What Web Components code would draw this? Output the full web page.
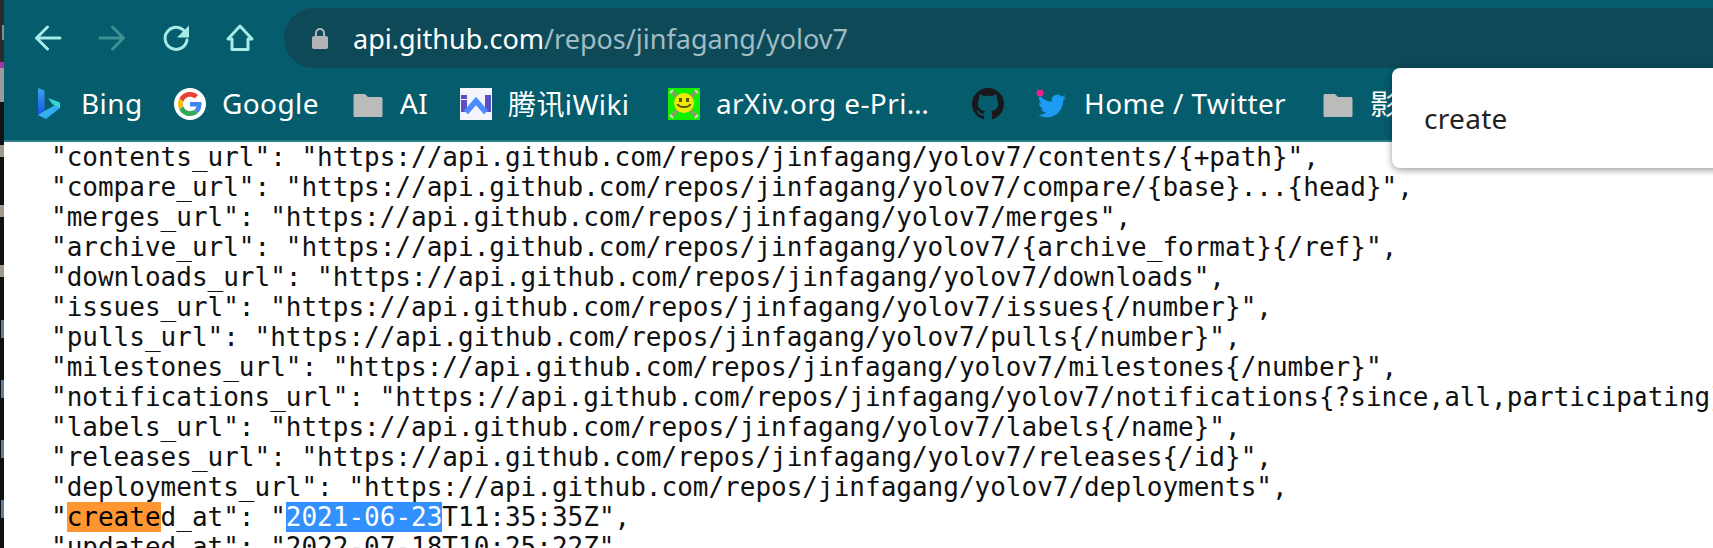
<!DOCTYPE html>
<html>
<head>
<meta charset="utf-8">
<title>api.github.com/repos/jinfagang/yolov7</title>
<style>
  html, body { margin: 0; height: 100%; overflow: hidden; background: #fff; }
  browser-shot { font-family: "Noto Sans", "Noto Sans CJK SC", sans-serif; }
</style>
</head>
<body>
<browser-shot>
  <side-strip slot="strip"></side-strip>
  <nav-bar url-host="api.github.com" url-path="/repos/jinfagang/yolov7"></nav-bar>
  <bookmark-bar>
    <book-mark w="141">
      <svg slot="icon" width="32" height="32" viewBox="0 0 32 32">
        <defs>
          <linearGradient id="bingA" x1="0" y1="0" x2="0" y2="1"><stop offset="0" stop-color="#37a6e8"/><stop offset="1" stop-color="#1a4fe8"/></linearGradient>
          <linearGradient id="bingB" x1="0" y1="0" x2="1" y2="1"><stop offset="0" stop-color="#35c8f0"/><stop offset="1" stop-color="#2f9cf0"/></linearGradient>
        </defs>
        <path fill="url(#bingA)" d="M5 0l6.5 2.5v20.5L5 27z"/>
        <path fill="url(#bingB)" d="M5 27l6.500-4 15.500-8.500v5.500L13 31z"/>
        <path fill="#38d6d6" d="M15 10l12 4.500v5.500l-7.500-3.800z"/>
      </svg>
      Bing
    </book-mark>
    <book-mark w="178">
      <svg slot="icon" width="32" height="32" viewBox="0 0 32 32">
        <circle cx="16" cy="16" r="16" fill="#fff"/>
        <g transform="translate(4 4) scale(.5)">
          <path fill="#EA4335" d="M24 9.500c3.540 0 6.710 1.220 9.210 3.600l6.850-6.850C35.900 2.380 30.470 0 24 0 14.620 0 6.510 5.380 2.560 13.220l7.980 6.190C12.430 13.720 17.740 9.500 24 9.500z"/>
          <path fill="#4285F4" d="M46.980 24.550c0-1.570-.15-3.090-.38-4.550H24v9.020h12.940c-.58 2.960-2.260 5.480-4.780 7.180l7.730 6c4.510-4.180 7.090-10.360 7.090-17.650z"/>
          <path fill="#FBBC05" d="M10.530 28.590c-.5-1.450-.78-2.990-.78-4.590s.27-3.140.78-4.590l-7.980-6.190C.92 16.460 0 20.120 0 24c0 3.880.92 7.540 2.560 10.780l7.970-6.190z"/>
          <path fill="#34A853" d="M24 48c6.480 0 11.930-2.130 15.890-5.810l-7.730-6c-2.150 1.450-4.920 2.300-8.160 2.300-6.260 0-11.570-4.220-13.470-9.910l-7.980 6.190C6.510 42.620 14.620 48 24 48z"/>
        </g>
      </svg>
      Google
    </book-mark>
    <book-mark w="108"><folder-icon slot="icon"></folder-icon>AI</book-mark>
    <book-mark w="208">
      <svg slot="icon" width="32" height="32" viewBox="0 0 32 32">
        <rect width="32" height="32" fill="#f3f5fa"/>
        <rect x="1" y="7" width="6" height="4" fill="#5a4fc4"/>
        <rect x="1" y="12" width="6" height="12" fill="#5a4fc4"/>
        <rect x="25" y="7" width="6" height="17" fill="#5a4fc4"/>
        <path d="M6 24.500L16 13l10 11.500" fill="none" stroke="#4a8cff" stroke-width="5.500"/>
      </svg>
      腾讯iWiki
    </book-mark>
    <book-mark w="304">
      <svg slot="icon" width="32" height="32" viewBox="0 0 32 32">
        <rect width="32" height="32" fill="#12f000"/>
        <path d="M3 3l26 26M29 3L3 29" stroke="#8f9a68" stroke-width="3.500"/>
        <path d="M2 5l3-3M27 2l3 3M2 27l3 3M27 30l3-3" stroke="#d8d8c0" stroke-width="2"/>
        <circle cx="16" cy="15" r="10" fill="#f2e70c"/>
        <rect x="11" y="10" width="3" height="4" fill="#4f5a10"/>
        <rect x="18" y="10" width="3" height="4" fill="#4f5a10"/>
        <path d="M9.500 16c1.500 4 11.500 4 13 0" fill="none" stroke="#4f5a10" stroke-width="2"/>
      </svg>
      arXiv.org e-Pri…
    </book-mark>
    <book-mark w="64">
      <svg slot="icon" width="32" height="32" viewBox="0 0 16 16">
        <path fill="#18171a" d="M8 0C3.580 0 0 3.580 0 8c0 3.540 2.290 6.530 5.470 7.590.4.07.55-.17.55-.38 0-.19-.01-.82-.01-1.490-2.010.37-2.530-.49-2.690-.94-.09-.23-.48-.94-.82-1.130-.28-.15-.68-.52-.01-.53.63-.01 1.080.58 1.230.82.72 1.210 1.870.87 2.330.66.07-.52.28-.87.51-1.070-1.780-.2-3.640-.89-3.640-3.950 0-.87.31-1.590.82-2.150-.08-.2-.36-1.020.08-2.120 0 0 .67-.21 2.200.82.64-.18 1.320-.27 2-.27.68 0 1.360.09 2 .27 1.530-1.040 2.200-.82 2.200-.82.44 1.100.16 1.920.08 2.120.51.56.82 1.270.82 2.150 0 3.070-1.870 3.750-3.650 3.950.29.25.54.73.54 1.480 0 1.070-.01 1.930-.01 2.200 0 .21.15.46.55.38A8.013 8.013 0 0016 8c0-4.420-3.580-8-8-8z"/>
      </svg>
    </book-mark>
    <book-mark w="286">
      <svg slot="icon" width="32" height="32" viewBox="0 0 32 32">
        <g transform="translate(2 4) scale(1.170)">
          <path fill="#1d9bf0" d="M23.953 4.570a10 10 0 01-2.825.775 4.958 4.958 0 002.163-2.723c-.951.555-2.005.959-3.127 1.184a4.920 4.920 0 00-8.384 4.482C7.690 8.095 4.067 6.130 1.640 3.162a4.822 4.822 0 00-.666 2.475c0 1.710.87 3.213 2.188 4.096a4.904 4.904 0 01-2.228-.616v.06a4.923 4.923 0 003.946 4.827 4.996 4.996 0 01-2.212.085 4.936 4.936 0 004.604 3.417 9.867 9.867 0 01-6.102 2.105c-.39 0-.779-.023-1.170-.067a13.995 13.995 0 007.557 2.209c9.053 0 13.998-7.496 13.998-13.985 0-.21 0-.42-.015-.63A9.935 9.935 0 0024 4.590z"/>
        </g>
        <circle cx="4" cy="5" r="3.400" fill="#f0208a"/>
      </svg>
      Home / Twitter
    </book-mark>
    <book-mark w="200"><folder-icon slot="icon"></folder-icon>影视</book-mark>
  </bookmark-bar>
  <json-view>
    <json-line>"contents_url": "https://api.github.com/repos/jinfagang/yolov7/contents/{+path}",</json-line>
    <json-line>"compare_url": "https://api.github.com/repos/jinfagang/yolov7/compare/{base}...{head}",</json-line>
    <json-line>"merges_url": "https://api.github.com/repos/jinfagang/yolov7/merges",</json-line>
    <json-line>"archive_url": "https://api.github.com/repos/jinfagang/yolov7/{archive_format}{/ref}",</json-line>
    <json-line>"downloads_url": "https://api.github.com/repos/jinfagang/yolov7/downloads",</json-line>
    <json-line>"issues_url": "https://api.github.com/repos/jinfagang/yolov7/issues{/number}",</json-line>
    <json-line>"pulls_url": "https://api.github.com/repos/jinfagang/yolov7/pulls{/number}",</json-line>
    <json-line>"milestones_url": "https://api.github.com/repos/jinfagang/yolov7/milestones{/number}",</json-line>
    <json-line>"notifications_url": "https://api.github.com/repos/jinfagang/yolov7/notifications{?since,all,participating}",</json-line>
    <json-line>"labels_url": "https://api.github.com/repos/jinfagang/yolov7/labels{/name}",</json-line>
    <json-line>"releases_url": "https://api.github.com/repos/jinfagang/yolov7/releases{/id}",</json-line>
    <json-line>"deployments_url": "https://api.github.com/repos/jinfagang/yolov7/deployments",</json-line>
    <json-line>"<mark class="find">create</mark>d_at": "<mark class="sel">2021-06-23</mark>T11:35:35Z",</json-line>
    <json-line>"updated_at": "2022-07-18T10:25:22Z",</json-line>
  </json-view>
  <find-popup>create</find-popup>
</browser-shot>

<script>
class BrowserShot extends HTMLElement {
  constructor() {
    super();
    this.attachShadow({ mode: 'open' });
  }
  connectedCallback() {
    this.shadowRoot.innerHTML = `
      <style>
        :host {
          display: grid;
          grid-template-columns: 4px 1fr;
          width: 1713px;
          height: 548px;
          overflow: hidden;
          position: relative;
        }
        .main { display: flex; flex-direction: column; min-width: 0; position: relative; }
      </style>
      <slot name="strip"></slot>
      <div class="main"><slot></slot></div>
    `;
  }
}

class SideStrip extends HTMLElement {
  constructor() {
    super();
    this.attachShadow({ mode: 'open' });
  }
  connectedCallback() {
    this.shadowRoot.innerHTML = `
      <style>
        :host { display: flex; flex-direction: column; background: #111; overflow: hidden; }
        .tab { height: 62px; background: #2b2b2b; display: flex; padding-top: 25px; box-sizing: border-box; }
        .tab i { width: 2px; height: 15px; margin-left: 2px; background: #8a8a8a; }
        .pink { height: 6px; background: #a335a5; }
        .grey { height: 34px; background: #9a9a9a; margin-bottom: 43px; }
        .bit { height: 12px; margin-bottom: 48px; background: #a0998c; }
        .blue { height: 18px; margin-bottom: 42px; width: 3px; margin-left: 1px; background: #5b7f9e; }
      </style>
      <div class="tab"><i></i></div>
      <div class="pink"></div>
      <div class="grey"></div>
      <div class="bit"></div>
      <div class="bit"></div>
      <div class="bit" style="margin-bottom:43px"></div>
      <div class="blue"></div>
      <div class="blue"></div>
      <div class="blue"></div>
      <div class="blue"></div>
    `;
  }
}

class NavBar extends HTMLElement {
  constructor() {
    super();
    this.attachShadow({ mode: 'open' });
  }
  connectedCallback() {
    const host = this.getAttribute('url-host');
    const path = this.getAttribute('url-path');
    this.shadowRoot.innerHTML = `
      <style>
        :host {
          display: flex;
          align-items: center;
          background: #045c6c;
          padding: 8px 0 0 12px;
          height: 60px;
        }
        .btn { width: 64px; height: 60px; display: flex; align-items: center; justify-content: center; flex: none; }
        svg { display: block; }
        .line { fill: none; stroke: #a6ebe6; stroke-width: 3; stroke-linejoin: round; stroke-linecap: round; }
        .off { stroke: #3f9095; }
        .omni {
          flex: 1;
          height: 60px;
          margin-left: 12px;
          margin-right: -60px;
          background: #0e4957;
          border-radius: 30px;
          display: flex;
          align-items: center;
          padding-left: 28px;
          font-size: 27px;
          white-space: nowrap;
        }
        .lock { margin-right: 25px; flex: none; }
        .host { color: #fff; }
        .path { color: #a0bcc4; }
      </style>
      <div class="btn"><svg class="line" width="28" height="26" viewBox="0 0 28 26"><path d="M13.500 2L2.500 13l11 11M2.500 13H26"/></svg></div>
      <div class="btn"><svg class="line off" width="28" height="26" viewBox="0 0 28 26"><path d="M14.500 2l11 11-11 11M25.500 13H2"/></svg></div>
      <div class="btn"><svg width="28" height="28" viewBox="0 0 28 28"><path class="line" stroke-linecap="butt" d="M24 9.500A11 11 0 1 0 25 16"/><path fill="#a6ebe6" d="M27 1.500v12H15z"/></svg></div>
      <div class="btn"><svg class="line" width="28" height="28" viewBox="0 0 28 28"><path d="M14 2L2 15h4v10.500h16V15h4z"/></svg></div>
      <div class="omni">
        <svg class="lock" width="16" height="22" viewBox="0 0 16 22"><path fill="#b1b4b8" d="M2 9h1V6a5 5 0 0 1 10 0v3h1a2 2 0 0 1 2 2v9a2 2 0 0 1-2 2H2a2 2 0 0 1-2-2v-9a2 2 0 0 1 2-2zm3 0h6V6a3 3 0 0 0-6 0z"/></svg>
        <span class="host">${host}</span><span class="path">${path}</span>
      </div>
    `;
  }
}

class BookmarkBar extends HTMLElement {
  constructor() {
    super();
    this.attachShadow({ mode: 'open' });
  }
  connectedCallback() {
    this.shadowRoot.innerHTML = `
      <style>
        :host {
          display: flex;
          align-items: center;
          height: 72px;
          padding-left: 29px;
          background: #045c6c;
          border-bottom: 2px solid #2c7f8b;
          overflow: hidden;
          flex: none;
        }
      </style>
      <slot></slot>
    `;
  }
}

class BookMark extends HTMLElement {
  constructor() {
    super();
    this.attachShadow({ mode: 'open' });
  }
  connectedCallback() {
    this.style.setProperty('--w', this.getAttribute('w') + 'px');
    this.shadowRoot.innerHTML = `
      <style>
        :host {
          display: flex;
          align-items: center;
          gap: 17px;
          flex: none;
          width: var(--w);
          height: 32px;
          color: #fff;
          font-size: 28px;
          letter-spacing: .4px;
          white-space: nowrap;
        }
        .icon { display: block; width: 32px; height: 32px; flex: none; }
        .label { margin-top: -2px; margin-left: -1px; }
        ::slotted(svg) { display: block; }
      </style>
      <span class="icon"><slot name="icon"></slot></span>
      <span class="label"><slot></slot></span>
    `;
  }
}

class FolderIcon extends HTMLElement {
  constructor() {
    super();
    this.attachShadow({ mode: 'open' });
  }
  connectedCallback() {
    this.shadowRoot.innerHTML = `
      <style>:host { display: block; } svg { display: block; }</style>
      <svg width="32" height="32" viewBox="0 0 32 32"><path fill="#bbb" d="M3 6h10l3 3h13a1.500 1.500 0 0 1 1.500 1.500v17a1.500 1.500 0 0 1-1.500 1.500H3a1.500 1.500 0 0 1-1.500-1.500v-20A1.500 1.500 0 0 1 3 6z"/></svg>
    `;
  }
}

class JsonView extends HTMLElement {
  constructor() {
    super();
    this.attachShadow({ mode: 'open' });
  }
  connectedCallback() {
    this.shadowRoot.innerHTML = `
      <style>
        :host {
          display: block;
          flex: 1;
          background: #fff;
          color: #111;
          font: 26px/30px "DejaVu Sans Mono", monospace;
          padding-left: 47px;
          overflow: hidden;
        }
      </style>
      <slot></slot>
    `;
  }
}

class JsonLine extends HTMLElement {
  constructor() {
    super();
    this.attachShadow({ mode: 'open' });
  }
  connectedCallback() {
    this.shadowRoot.innerHTML = `<style>
        :host { display: block; white-space: pre; height: 30px; }
        ::slotted(mark.find) { background: #ff9632; color: #000; }
        ::slotted(mark.sel) { background: #3390ff; color: #fff; }
      </style><slot></slot>`;
  }
}

class FindPopup extends HTMLElement {
  constructor() {
    super();
    this.attachShadow({ mode: 'open' });
  }
  connectedCallback() {
    this.shadowRoot.innerHTML = `
      <style>
        :host {
          position: absolute;
          top: 68px;
          left: 1388px;
          width: 360px;
          height: 100px;
          box-sizing: border-box;
          display: flex;
          align-items: center;
          padding-left: 32px;
          background: #fff;
          color: #222;
          font-size: 28px;
          letter-spacing: .3px;
          border-radius: 8px;
          box-shadow: 0 2px 7px rgba(0,0,0,.4);
        }
      </style>
      <slot></slot>
    `;
  }
}

customElements.define('browser-shot', BrowserShot);
customElements.define('side-strip', SideStrip);
customElements.define('nav-bar', NavBar);
customElements.define('bookmark-bar', BookmarkBar);
customElements.define('book-mark', BookMark);
customElements.define('folder-icon', FolderIcon);
customElements.define('json-view', JsonView);
customElements.define('json-line', JsonLine);
customElements.define('find-popup', FindPopup);
</script>
</body>
</html>
